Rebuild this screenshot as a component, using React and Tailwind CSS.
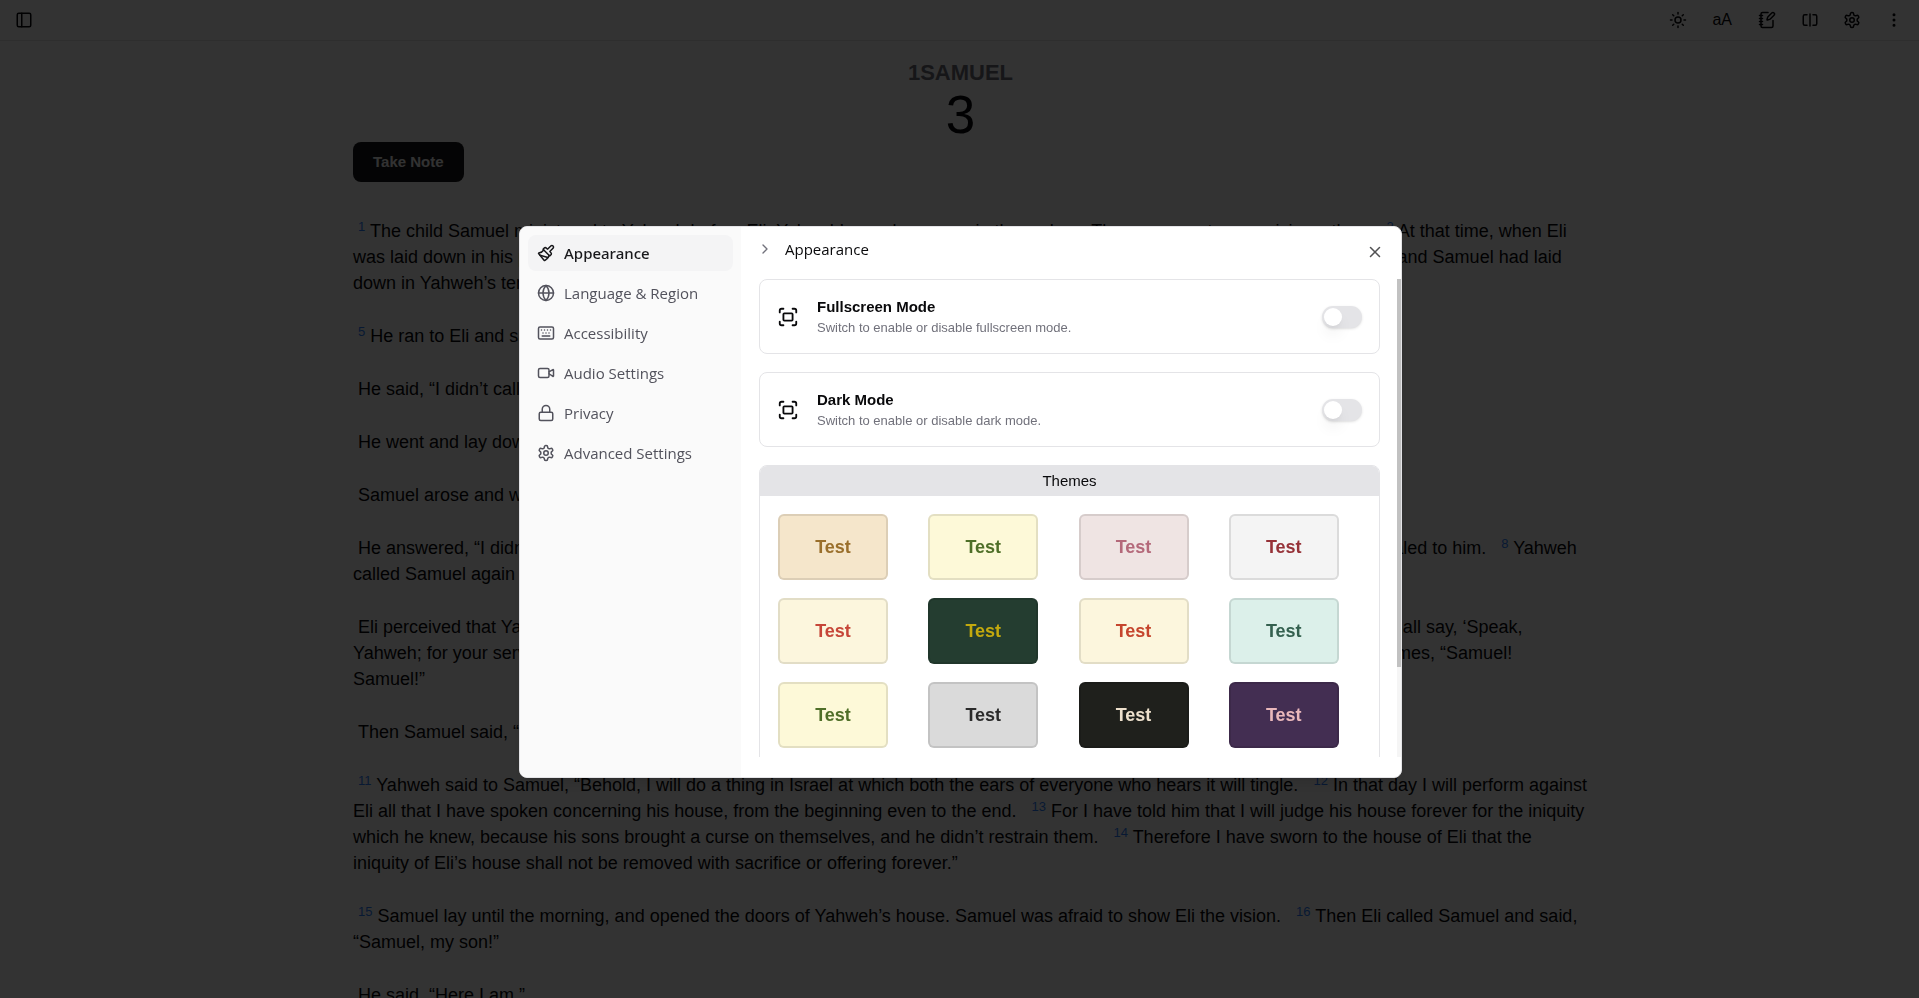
import {
  ChevronRight,
  EllipsisVertical,
  Fullscreen,
  Globe,
  Keyboard,
  Lock,
  NotebookPen,
  Paintbrush,
  PanelLeft,
  SquareSplitHorizontal,
  Sun,
  Video,
  X,
} from "lucide-react";

function Gear({ className }) {
  return (
    <svg viewBox="0 0 24 24" fill="none" stroke="currentColor" strokeWidth="2" strokeLinecap="round" strokeLinejoin="round" className={className} aria-hidden="true">
      <path d="M12.22 2h-.44a2 2 0 0 0-2 2v.18a2 2 0 0 1-1 1.73l-.43.25a2 2 0 0 1-2 0l-.15-.08a2 2 0 0 0-2.73.73l-.22.38a2 2 0 0 0 .73 2.73l.15.1a2 2 0 0 1 1 1.72v.51a2 2 0 0 1-1 1.74l-.15.09a2 2 0 0 0-.73 2.73l.22.38a2 2 0 0 0 2.73.73l.15-.08a2 2 0 0 1 2 0l.43.25a2 2 0 0 1 1 1.73V20a2 2 0 0 0 2 2h.44a2 2 0 0 0 2-2v-.18a2 2 0 0 1 1-1.73l.43-.25a2 2 0 0 1 2 0l.15.08a2 2 0 0 0 2.73-.73l.22-.39a2 2 0 0 0-.73-2.73l-.15-.08a2 2 0 0 1-1-1.74v-.5a2 2 0 0 1 1-1.74l.15-.09a2 2 0 0 0 .73-2.73l-.22-.38a2 2 0 0 0-2.73-.73l-.15.08a2 2 0 0 1-2 0l-.43-.25a2 2 0 0 1-1-1.73V4a2 2 0 0 0-2-2z" />
      <circle cx="12" cy="12" r="3" />
    </svg>
  );
}

const passages = [
  [
    [1, "The child Samuel ministered to Yahweh before Eli. Yahweh’s word was rare in those days. There were not many visions, then."],
    [2, "At that time, when Eli was laid down in his place (now his eyes had begun to grow dim, so that he could not see),"],
    [3, "and God’s lamp hadn’t yet gone out, and Samuel had laid down in Yahweh’s temple where God’s ark was,"],
    [4, "Yahweh called Samuel. He said, “Here I am.”"],
  ],
  [[5, "He ran to Eli and said, “Here I am; for you called me.”"]],
  [[null, "He said, “I didn’t call. Lie down again.”"]],
  [
    [null, "He went and lay down."],
    [6, "Yahweh called yet again, “Samuel!”"],
  ],
  [[null, "Samuel arose and went to Eli and said, “Here I am; for you called me.”"]],
  [
    [null, "He answered, “I didn’t call, my son. Lie down again.”"],
    [7, "Now Samuel didn’t yet know Yahweh, neither was Yahweh’s word yet revealed to him."],
    [8, "Yahweh called Samuel again the third time. He arose and went to Eli and said, “Here I am; for you called me.”"],
  ],
  [
    [null, "Eli perceived that Yahweh had called the child."],
    [9, "Therefore Eli said to Samuel, “Go, lie down. It shall be, if he calls you, that you shall say, ‘Speak, Yahweh; for your servant hears.’” So Samuel went and lay down in his place."],
    [10, "Yahweh came, and stood, and called as at other times, “Samuel!\nSamuel!”"],
  ],
  [[null, "Then Samuel said, “Speak; for your servant hears.”"]],
  [
    [11, "Yahweh said to Samuel, “Behold, I will do a thing in Israel at which both the ears of everyone who hears it will tingle."],
    [12, "In that day I will perform against Eli all that I have spoken concerning his house, from the beginning even to the end."],
    [13, "For I have told him that I will judge his house forever for the iniquity which he knew, because his sons brought a curse on themselves, and he didn’t restrain them."],
    [14, "Therefore I have sworn to the house of Eli that the\niniquity of Eli’s house shall not be removed with sacrifice or offering forever.”"],
  ],
  [
    [15, "Samuel lay until the morning, and opened the doors of Yahweh’s house. Samuel was afraid to show Eli the vision."],
    [16, "Then Eli called Samuel and said, “Samuel, my son!”"],
  ],
  [[null, "He said, “Here I am.”"]],
];

const sections = [
  { name: "Appearance", Icon: Paintbrush },
  { name: "Language & Region", Icon: Globe },
  { name: "Accessibility", Icon: Keyboard },
  { name: "Audio Settings", Icon: Video },
  { name: "Privacy", Icon: Lock },
  { name: "Advanced Settings", Icon: Gear },
];

const themes = [
  "bg-[#f5e6cb] text-[#9a6f2b]",
  "bg-[#fdf9d8] text-[#4f6f28]",
  "bg-[#efe4e3] text-[#b4697a]",
  "bg-[#f4f4f4] text-[#963238]",
  "bg-[#fcf6dd] text-[#c64638]",
  "bg-[#243d30] text-[#c3a90e]",
  "bg-[#fcf6dd] text-[#c5452d]",
  "bg-[#dcf0ea] text-[#34604f]",
  "bg-[#fdf9d8] text-[#4f6f28]",
  "bg-[#dadada] text-[#2b2b2b]",
  "bg-[#1f201c] text-[#ede0cc]",
  "bg-[#432e52] text-[#eab8bb]",
];

function Verse({ number, text }) {
  return (
    <span>
      {"\u00a0"}
      {number && <sup className="text-[13px] text-blue-500">{number}</sup>}
      {number && " "}
      {text}
      {"\u00a0 "}
    </span>
  );
}

function ToggleCard({ id, title, description }) {
  return (
    <div className="flex h-[75px] shrink-0 items-center gap-[18px] rounded-lg border border-zinc-200 px-[17px]">
      <Fullscreen className="size-[22px] shrink-0" />
      <label htmlFor={id} className="flex-1">
        <span className="block text-[15px] leading-[22px] font-bold">{title}</span>
        <span className="block text-[13px] leading-5 text-zinc-500">{description}</span>
      </label>
      <input
        id={id}
        type="checkbox"
        role="switch"
        className="flex h-[22px] w-10 shrink-0 appearance-none items-center rounded-full bg-zinc-200 px-0.5 shadow-sm before:size-[18px] before:rounded-full before:bg-white before:shadow-lg checked:justify-end checked:bg-zinc-900"
      />
    </div>
  );
}

function Reader() {
  return (
    <div>
      <header className="flex h-[41px] items-center justify-between border-b border-zinc-200 pr-4 pl-[15px]">
        <button type="button" aria-label="Toggle sidebar">
          <PanelLeft className="size-[18px]" />
        </button>
        <div className="flex items-center gap-6">
          <button type="button" aria-label="Brightness"><Sun className="size-[18px]" /></button>
          <button type="button" className="px-px text-base leading-5">aA</button>
          <button type="button" aria-label="Notes" className="px-px"><NotebookPen className="size-[18px]" /></button>
          <button type="button" aria-label="Split view"><SquareSplitHorizontal className="size-[18px]" /></button>
          <button type="button" aria-label="Settings"><Gear className="size-[18px]" /></button>
          <button type="button" aria-label="More"><EllipsisVertical className="size-[18px]" /></button>
        </div>
      </header>
      <main className="mx-auto max-w-[1213px] pt-[17px]">
        <h1 className="pl-0.5 text-center">
          <span className="block text-[22px] leading-[30px] font-bold text-zinc-500">1SAMUEL</span>
          <span className="block text-[53px] leading-[54px]">3</span>
        </h1>
        <button type="button" className="h-10 rounded-lg bg-zinc-900 px-5 text-[15px] font-bold text-zinc-50">
          Take Note
        </button>
        <article className="mt-9 -mr-[27px] flex flex-col gap-[27px] text-[18px] leading-[26px] whitespace-pre-line">
          {passages.map((verses, i) => (
            <p key={i}>
              {verses.map(([number, text], j) => (
                <Verse key={j} number={number} text={text} />
              ))}
            </p>
          ))}
        </article>
      </main>
    </div>
  );
}

function SettingsDialog() {
  return (
    <div className="fixed inset-0 flex items-center justify-center bg-black/80 pt-1.5 pl-0.5">
      <section role="dialog" aria-label="Settings" className="relative flex h-[552px] w-full max-w-[883px] overflow-hidden rounded-lg border border-zinc-200 bg-white shadow-lg">
        <nav aria-label="Settings sections" className="w-[221px] shrink-0 bg-neutral-50 p-2 font-['Open_Sans','Noto_Sans',sans-serif] text-[15px] leading-5">
          <ul className="flex flex-col gap-1">
            {sections.map(({ name, Icon }, i) => (
              <li key={name}>
                <a
                  href="#settings"
                  className={
                    i === 0
                      ? "flex h-9 items-center gap-[9px] rounded-lg bg-zinc-100 px-[9px] font-['Noto_Sans'] font-medium text-zinc-900"
                      : "flex h-9 items-center gap-[9px] rounded-lg px-[9px] text-zinc-600"
                  }
                >
                  <Icon className="size-[18px] shrink-0" />
                  {name}
                </a>
              </li>
            ))}
          </ul>
        </nav>
        <div className="flex min-w-0 flex-1 flex-col pb-5">
          <div className="flex h-[52px] shrink-0 items-center gap-3 px-4 pb-2 font-['Open_Sans','Noto_Sans',sans-serif] text-[15px]">
            <ChevronRight className="size-4 text-zinc-500" />
            Appearance
          </div>
          <div className="flex min-h-0 flex-1">
            <div className="flex min-w-0 flex-1 flex-col gap-[18px] overflow-hidden pr-[17px] pl-[18px]">
              <ToggleCard id="fullscreen" title="Fullscreen Mode" description="Switch to enable or disable fullscreen mode." />
              <ToggleCard id="dark" title="Dark Mode" description="Switch to enable or disable dark mode." />
              <div className="shrink-0 overflow-hidden rounded-lg border border-zinc-200">
                <h2 className="bg-zinc-200 text-center text-[15px] leading-[30px]">Themes</h2>
                <div className="grid grid-cols-4 gap-[18px] p-[18px]">
                  {themes.map((colors, i) => (
                    <button
                      key={i}
                      type="button"
                      className={`${colors} h-[66px] w-[110px] rounded-md border-2 border-black/10 text-[18px] font-bold`}
                    >
                      Test
                    </button>
                  ))}
                </div>
              </div>
            </div>
            <div className="w-1 bg-neutral-100">
              <div className="h-[388px] bg-[#c1c1c1]" />
            </div>
          </div>
        </div>
        <button type="button" aria-label="Close" className="absolute top-4 right-[17px] opacity-70">
          <X className="size-[18px]" />
        </button>
      </section>
    </div>
  );
}

export default function App() {
  return (
    <div className="h-screen overflow-hidden bg-white font-['Liberation_Sans',Arial,sans-serif] text-zinc-950">
      <Reader />
      <SettingsDialog />
    </div>
  );
}
